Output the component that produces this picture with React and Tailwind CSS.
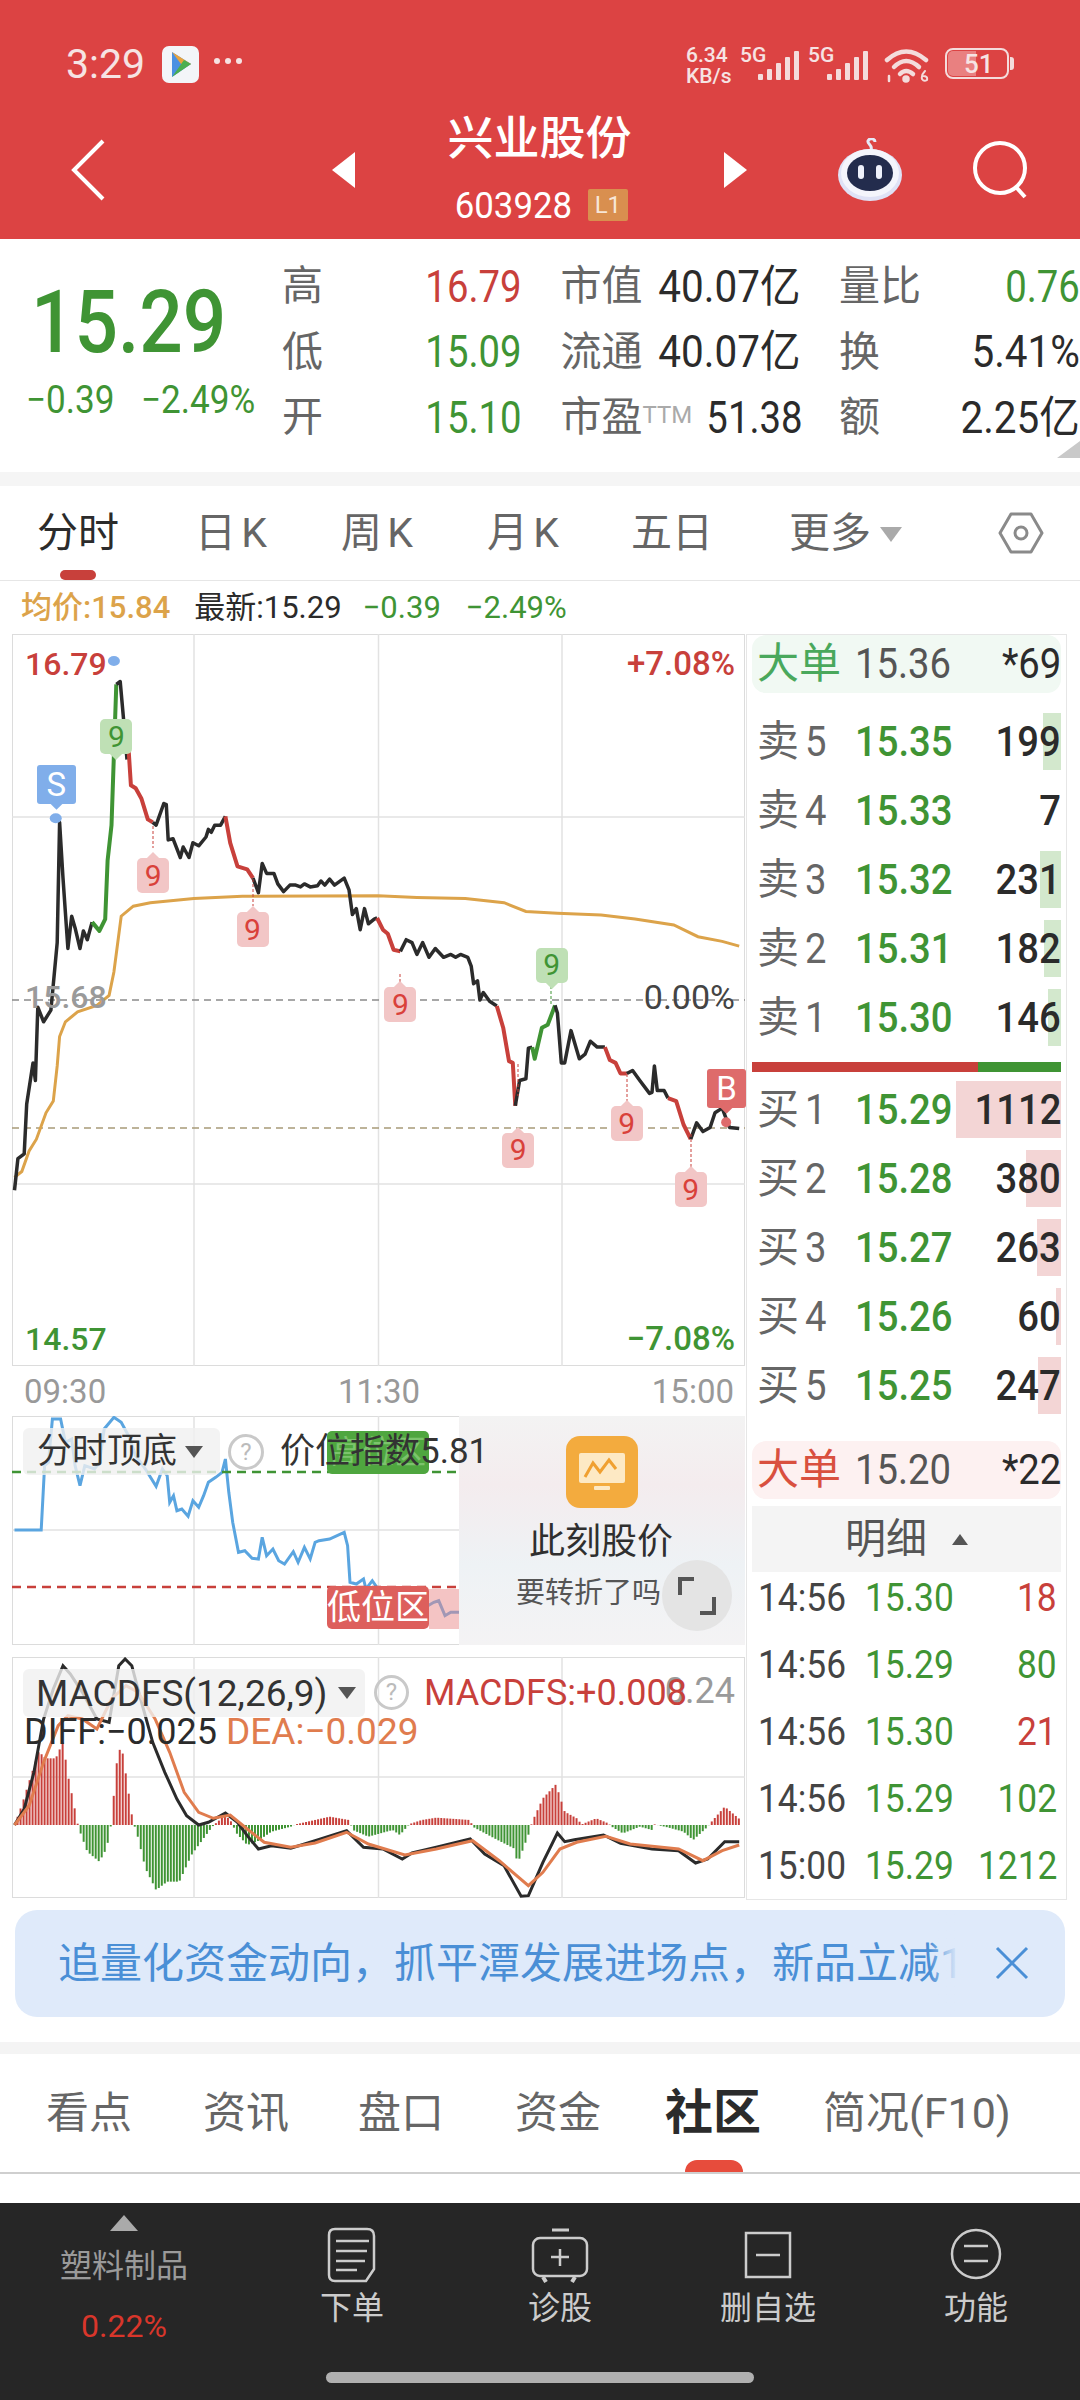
const GREEN = "#3f9434";
const RED = "#c8403b";
const DARK = "#2b2b2b";

// intraday price, one run of points per colour
const priceRuns = [
  [DARK, [[30,1212],[37,1158],[50,1150],[55,1065],[68,995],[73,1025],[78,900],[90,925],[105,905],[118,790],[123,585],[130,680],[140,800],[148,745],[155,765],[165,800],[172,770],[180,785],[190,755]]],
  [GREEN, [[190,755],[205,770],[217,750],[222,650],[230,590],[240,350]]],
  [DARK, [[240,350],[248,345],[255,410],[262,478]]],
  [RED, [[265,458],[270,522],[280,527],[292,545],[305,580],[315,585]]],
  [DARK, [[315,585],[322,590],[338,553],[343,555],[347,615],[357,613],[372,645],[378,627],[390,645],[398,620],[410,625],[425,610],[430,597],[436,602],[443,590],[455,590],[465,575]]],
  [RED, [[465,575],[475,620],[490,660],[510,665],[522,680]]],
  [DARK, [[522,680],[533,705],[541,655],[550,672],[565,672],[573,690],[585,703],[598,692],[610,692],[620,695],[628,690],[640,695],[655,693],[662,685],[670,692],[680,682],[690,692],[710,680],[720,700],[727,742],[735,732],[743,768],[752,732],[760,758],[772,750],[778,748]]],
  [RED, [[778,748],[790,768],[800,775],[812,802],[826,805]]],
  [DARK, [[826,805],[838,785],[850,790],[860,810],[872,790],[885,815],[898,800],[915,815],[930,810],[940,815],[950,810],[965,815],[972,830],[977,860],[985,855],[990,888],[997,875],[1010,890],[1025,898]]],
  [RED, [[1025,898],[1038,935],[1050,992],[1058,995],[1063,1068]]],
  [DARK, [[1063,1068],[1072,1025],[1085,1022],[1090,970],[1098,968]]],
  [GREEN, [[1098,968],[1103,988],[1118,935],[1130,930],[1145,897]]],
  [DARK, [[1145,897],[1150,910],[1158,995],[1165,995],[1178,940],[1195,988],[1207,980],[1218,958],[1232,968],[1248,968]]],
  [RED, [[1248,968],[1258,990],[1270,995],[1280,1013],[1293,1013]]],
  [DARK, [[1293,1013],[1305,1008],[1320,1025],[1340,1047],[1345,1045],[1350,1000],[1356,1042],[1370,1042],[1378,1055]]],
  [RED, [[1378,1055],[1395,1060],[1410,1100],[1425,1125]]],
  [DARK, [[1425,1125],[1437,1097],[1450,1112],[1465,1105],[1475,1080],[1490,1072],[1505,1105],[1525,1107]]],
];

const avgLine = [[30,1190],[45,1180],[60,1145],[75,1125],[95,1080],[110,1060],[118,1000],[123,950],[135,925],[160,908],[200,897],[225,880],[235,840],[250,745],[275,728],[310,722],[400,715],[500,711],[780,710],[860,713],[960,715],[1040,722],[1085,737],[1150,740],[1240,743],[1310,750],[1390,760],[1440,780],[1490,788],[1525,796]];

const priceIndex = [[30,393],[85,393],[92,200],[100,190],[108,60],[125,60],[135,130],[148,120],[155,200],[165,260],[175,200],[195,210],[205,190],[215,90],[235,55],[250,70],[265,110],[280,170],[300,210],[322,262],[335,210],[345,230],[350,310],[358,290],[365,335],[375,330],[388,352],[398,305],[410,325],[420,290],[430,250],[445,235],[458,220],[465,180],[472,280],[480,370],[492,460],[505,455],[520,478],[533,480],[541,415],[550,470],[563,450],[575,485],[587,495],[605,458],[615,490],[628,445],[640,480],[650,430],[658,425],[680,420],[710,400],[717,440],[722,550],[735,555],[750,540],[755,570],[768,545],[780,570],[800,600],[860,640],[895,610],[905,605],[918,650],[930,640],[947,640]];

const diffLine = [[30,1278],[50,1230],[70,1120],[90,960],[110,870],[130,800],[145,825],[170,880],[200,960],[225,970],[245,800],[258,780],[272,800],[290,900],[315,1030],[340,1120],[365,1200],[385,1250],[410,1278],[430,1270],[465,1242],[490,1270],[510,1310],[533,1350],[560,1340],[600,1348],[650,1325],[715,1295],[750,1345],[790,1350],[830,1380],[850,1362],[900,1345],[970,1320],[1000,1365],[1040,1400],[1075,1492],[1090,1490],[1120,1390],[1150,1302],[1165,1328],[1185,1322],[1245,1308],[1280,1333],[1345,1350],[1400,1355],[1435,1392],[1460,1380],[1495,1328],[1525,1328]];
const deaLine = [[30,1278],[60,1220],[90,1090],[120,980],[140,950],[170,960],[200,990],[230,900],[260,860],[285,880],[320,960],[350,1060],[380,1180],[410,1240],[440,1258],[475,1248],[510,1290],[545,1330],[600,1345],[650,1332],[715,1300],[760,1335],[835,1368],[900,1350],[975,1325],[1030,1385],[1090,1460],[1120,1420],[1155,1350],[1190,1330],[1250,1312],[1300,1335],[1400,1350],[1450,1385],[1490,1355],[1525,1338]];

// outline of the MACD columns, signed height from the zero line
const histOutline = [[30,0],[45,60],[60,130],[80,220],[95,200],[115,200],[130,250],[140,150],[150,80],[160,5],[165,-20],[180,-80],[205,-110],[220,-70],[228,-10],[233,60],[240,180],[250,245],[262,130],[272,30],[276,0],[280,-10],[300,-130],[322,-195],[345,-170],[370,-170],[395,-90],[420,-40],[438,-5],[445,5],[465,30],[480,5],[485,-20],[510,-60],[530,-50],[560,-20],[600,-5],[610,2],[680,25],[720,15],[724,0],[728,-15],[760,-35],[810,-15],[825,-30],[840,-5],[845,3],[870,15],[900,22],[970,15],[975,-5],[1020,-40],[1060,-70],[1068,-115],[1090,-30],[1098,10],[1120,80],[1147,122],[1165,40],[1190,20],[1200,2],[1230,20],[1255,5],[1262,-5],[1285,-25],[1320,-5],[1345,-15],[1350,2],[1380,-8],[1410,-20],[1430,-45],[1460,-5],[1465,5],[1495,55],[1528,15]];

const sellRows = [
  ["卖", 5, "15.35", 199, 18],
  ["卖", 4, "15.33", 7, 0],
  ["卖", 3, "15.32", 231, 21],
  ["卖", 2, "15.31", 182, 17],
  ["卖", 1, "15.30", 146, 13],
];
const buyRows = [
  ["买", 1, "15.29", 1112, 105],
  ["买", 2, "15.28", 380, 35],
  ["买", 3, "15.27", 263, 24],
  ["买", 4, "15.26", 60, 5],
  ["买", 5, "15.25", 247, 23],
];
const ticks = [
  ["14:56", "15.30", "18", RED],
  ["14:56", "15.29", "80", GREEN],
  ["14:56", "15.30", "21", RED],
  ["14:56", "15.29", "102", GREEN],
  ["15:00", "15.29", "1212", GREEN],
];

const chartX = (x) => x / 2.063 - 12;
const mainY = (y) => y / 1.704 - 155;
const indexY = (y) => y / 3 - 17;
const macdY = (y) => y / 3 - 258;
const pts = (list, fy) => list.map(([x, y]) => `${chartX(x).toFixed(1)},${fy(y).toFixed(1)}`).join(" ");

function histBars() {
  const bars = [];
  for (let x = 30; x <= 1528; x += 6.2) {
    const i = histOutline.findIndex((p) => p[0] >= x);
    const b = histOutline[Math.max(i, 1)];
    const a = histOutline[Math.max(i, 1) - 1];
    const v = a[1] + ((b[1] - a[1]) * (x - a[0])) / (b[0] - a[0] || 1);
    bars.push([x, v]);
  }
  return bars;
}

function NineTag({ x, y, tone, up }) {
  const tones = {
    red: "bg-[#f2c6c6] text-[#d9413a]",
    green: "bg-[#bfe0b5] text-[#3f9434]",
  };
  return (
    <div
      className={`absolute w-[32px] h-[35px] rounded-[5px] flex items-center justify-center text-[30px] leading-none font-normal ${tones[tone]}`}
      style={{ left: chartX(x) - 16, top: mainY(y) - 17 }}
    >
      <div className={`absolute left-[11px] w-[10px] h-[10px] rotate-45 ${up ? "-top-[4px]" : "-bottom-[4px]"} ${tones[tone]}`} />
      <span className="relative">9</span>
    </div>
  );
}

function SideTag({ x, y, box, label }) {
  return (
    <div
      className={`absolute w-[39px] h-[39px] rounded-[3px] flex items-center justify-center text-[33px] leading-none font-normal text-white ${box}`}
      style={{ left: chartX(x) - 19, top: mainY(y) - 19 }}
    >
      <div className={`absolute left-[15px] -bottom-[4px] w-[9px] h-[9px] rotate-45 ${box}`} />
      <span className="relative">{label}</span>
    </div>
  );
}

function Signal({ x }) {
  return (
    <svg width="46" height="30" viewBox="0 0 46 30" className={x}>
      <rect x="1" y="24" width="5" height="6" rx="1" fill="#f4dcdc" />
      <rect x="10" y="19" width="5" height="11" rx="1" fill="#f4dcdc" />
      <rect x="19" y="13" width="5" height="17" rx="1" fill="#f4dcdc" />
      <rect x="28" y="7" width="5" height="23" rx="1" fill="#f4dcdc" />
      <rect x="37" y="1" width="5" height="29" rx="1" fill="#f4dcdc" />
    </svg>
  );
}

function StatusBar() {
  return (
    <div className="h-[100px] relative flex items-start pt-[44px] text-[#f6e3e3]">
      <span className="ml-[66px] text-[41px] leading-[40px]">3:29</span>
      <svg width="37" height="37" viewBox="0 0 37 37" className="ml-[17px] mt-[2px]">
        <rect width="37" height="37" rx="7" fill="#f3f5f8" />
        <path d="M10 6 L29 18 L10 31 Z" fill="#4a90e2" />
        <path d="M10 6 L29 18 L22 22 Z" fill="#e9a33d" />
        <path d="M10 31 L29 18 L22 14 Z" fill="#4caf50" />
      </svg>
      <span className="ml-[15px] mt-[14px] flex gap-[5px]">
        <i className="w-[6px] h-[6px] rounded-full bg-[#f6e3e3]" />
        <i className="w-[6px] h-[6px] rounded-full bg-[#f6e3e3]" />
        <i className="w-[6px] h-[6px] rounded-full bg-[#f6e3e3]" />
      </span>
      <div className="absolute left-[686px] top-[45px] text-[21px] leading-[20px] font-medium">
        <div>6.34</div>
        <div className="mt-[1px]">KB/s</div>
      </div>
      <span className="absolute left-[740px] top-[45px] text-[21px] leading-[20px] font-medium">5G</span>
      <Signal x="absolute left-[757px] top-[50px]" />
      <span className="absolute left-[808px] top-[45px] text-[21px] leading-[20px] font-medium">5G</span>
      <Signal x="absolute left-[826px] top-[50px]" />
      <svg width="48" height="36" viewBox="0 0 48 36" className="absolute left-[884px] top-[47px]" fill="none" stroke="#f4dcdc" strokeWidth="4.5" strokeLinecap="round">
        <path d="M3 13 Q22 -4 42 13" />
        <path d="M10 20 Q22 8 35 20" />
        <path d="M16 27 Q22 21 29 27" />
        <circle cx="22" cy="32" r="1.5" fill="#f4dcdc" />
        <path d="M5 29 L5 34" strokeWidth="2.5" />
        <path d="M41 24 Q37 28 38 32 Q40 35 43 33 Q44 29 39 29" strokeWidth="2" />
      </svg>
      <div className="absolute left-[945px] top-[48px] w-[64px] h-[31px] rounded-[8px] border-2 border-[#f4dcdc] flex items-center">
        <div className="absolute left-[1px] top-[1px] bottom-[1px] w-[28px] rounded-l-[5px] bg-[#e98080]" />
        <span className="relative ml-[17px] text-[26px] leading-none font-medium">51</span>
      </div>
      <div className="absolute left-[1010px] top-[57px] w-[4px] h-[13px] rounded-r-[3px] bg-[#f4dcdc]" />
    </div>
  );
}

function NavBar() {
  return (
    <div className="h-[139px] flex items-center text-white">
      <svg width="37" height="62" viewBox="0 0 37 62" fill="none" stroke="#fff" strokeWidth="4" className="ml-[70px] shrink-0">
        <path d="M33 2 L4 31 L33 60" />
      </svg>
      <div className="ml-[225px] w-0 h-0 border-y-[18px] border-y-transparent border-r-[23px] border-r-white" />
      <div className="w-[369px] self-stretch pt-[10px] flex flex-col items-center">
        <div className="text-[46px] leading-[56px] font-medium">兴业股份</div>
        <div className="mt-[23px] h-[32px] flex items-center gap-[12px]">
          <span className="text-[37px] leading-none inline-block scale-x-[.94]">603928</span>
          <span className="w-[40px] h-[32px] rounded-[2px] bg-[#d98f4f] text-[#f7e6d6] text-[24px] leading-[32px] text-center">L1</span>
        </div>
      </div>
      <div className="w-0 h-0 border-y-[18px] border-y-transparent border-l-[23px] border-l-white" />
      <svg width="67" height="64" viewBox="0 0 67 64" className="ml-[90px]">
        <path d="M34 12 C36 7 30 6 31 3 C33 -1 38 1 38 4" fill="none" stroke="#e6e9f7" strokeWidth="3" />
        <ellipse cx="33" cy="37" rx="32" ry="26" fill="#dfe2f6" />
        <ellipse cx="33" cy="35" rx="29" ry="24" fill="#f4f5fc" />
        <ellipse cx="33" cy="35" rx="23" ry="18" fill="#232c4d" />
        <rect x="21" y="27" width="6" height="14" rx="3" fill="#eef1fb" />
        <rect x="39" y="27" width="6" height="14" rx="3" fill="#eef1fb" />
      </svg>
      <svg width="56" height="58" viewBox="0 0 56 58" fill="none" stroke="#fff" strokeWidth="4" className="ml-[69px] shrink-0">
        <circle cx="27" cy="27" r="25" />
        <path d="M43 46 L52 56" />
      </svg>
    </div>
  );
}

function QuoteCell({ label, value, color = "text-[#2b2b2b]", sup, wide }) {
  return (
    <div className="flex items-center justify-between h-[65.5px]">
      <span className="text-[41px] leading-none text-[#666] whitespace-nowrap">
        {label}
        {sup && <span className="text-[24px] align-[8px] text-[#aaa]">{sup}</span>}
      </span>
      <span className={`inline-block origin-right text-[44px] leading-none whitespace-nowrap ${wide ? "scale-x-[.92]" : "scale-x-[.87]"} ${color}`}>{value}</span>
    </div>
  );
}

function Quote() {
  return (
    <div className="h-[233px] relative bg-white flex">
      <div className="w-[282px] shrink-0">
        <div className="pl-[31px] pt-[40px] text-[88px] leading-[86px] font-medium text-[#3f9434]">
          <span className="inline-block origin-left scale-x-[.87]">15.29</span>
        </div>
        <div className="pl-[26px] mt-[15px] flex text-[39px] leading-[40px] text-[#3f9434]">
          <span className="w-[115px] inline-block origin-left scale-x-[.9]">−0.39</span>
          <span className="inline-block origin-left scale-x-[.9]">−2.49%</span>
        </div>
      </div>
      <div className="pt-[15px] grid grid-cols-[240px_240px_241px] gap-x-[38.5px] content-start">
        <QuoteCell label="高" value="16.79" color="text-[#c8403b]" />
        <QuoteCell label="市值" value="40.07亿" wide />
        <QuoteCell label="量比" value="0.76" color="text-[#3f9434]" />
        <QuoteCell label="低" value="15.09" color="text-[#3f9434]" />
        <QuoteCell label="流通" value="40.07亿" wide />
        <QuoteCell label="换" value="5.41%" wide />
        <QuoteCell label="开" value="15.10" color="text-[#3f9434]" />
        <QuoteCell label="市盈" sup="TTM" value="51.38" />
        <QuoteCell label="额" value="2.25亿" wide />
      </div>
      <div className="absolute right-0 bottom-[14px] w-0 h-0 border-b-[17px] border-b-[#c9c9c9] border-l-[23px] border-l-transparent" />
    </div>
  );
}

function ChartTabs() {
  const tabs = [["日 K", "w-[146px]"], ["周 K", "w-[146px]"], ["月 K", "w-[144px]"], ["五日", "w-[158px]"]];
  return (
    <div className="h-[95px] relative bg-white border-b border-[#e6e6e6] flex items-center pl-[37px] text-[41px] leading-none text-[#666] [word-spacing:-5px]">
      <span className="w-[158px] text-[#2b2b2b]">分时</span>
      {tabs.map(([t, w]) => (
        <span key={t} className={w}>{t}</span>
      ))}
      <span>更多</span>
      <div className="ml-[9px] mt-[3px] w-0 h-0 border-x-[11px] border-x-transparent border-t-[15px] border-t-[#aaa]" />
      <svg width="46" height="46" viewBox="0 0 46 46" fill="none" stroke="#8a8a8a" strokeWidth="3" className="absolute left-[998px] top-[24px]">
        <path d="M13 4 H33 L44 23 L33 42 H13 L2 23 Z" strokeLinejoin="round" />
        <circle cx="23" cy="23" r="6" />
      </svg>
      <div className="absolute left-[60px] top-[84px] w-[36px] h-[10px] rounded-full bg-[#c8403b]" />
    </div>
  );
}

function InfoLine() {
  return (
    <div className="h-[53px] bg-white flex items-center pl-[21px] text-[31px] leading-none">
      <span className="text-[#dca34a] font-medium">均价:15.84</span>
      <span className="ml-[24px] text-[#2b2b2b]">最新:15.29</span>
      <span className="ml-[21px] text-[#3f9434]">−0.39</span>
      <span className="ml-[25px] text-[#3f9434]">−2.49%</span>
    </div>
  );
}

function MainChart() {
  return (
    <div className="relative w-[733px] h-[732px] font-medium">
      <svg width="733" height="732" className="absolute left-0 top-0" fill="none">
        <rect x="0.5" y="0.5" width="732" height="731" stroke="#dcdcdc" />
        <path d="M182 0 V732 M366.5 0 V732 M550 0 V732 M0 183 H733 M0 550 H733" stroke="#e2e2e2" strokeWidth="1.5" />
        <path d="M0 366 H733" stroke="#8a8a8a" strokeWidth="1.5" strokeDasharray="7 5" />
        <path d="M0 494 H733" stroke="#a89a78" strokeWidth="1.5" strokeDasharray="7 5" />
        <polyline points={pts(avgLine, mainY)} stroke="#dca34a" strokeWidth="3" />
        {priceRuns.map(([color, run], i) => (
          <polyline key={i} points={pts(run, mainY)} stroke={color} strokeWidth={color === DARK ? 3.5 : 4} strokeLinejoin="round" />
        ))}
        <path d="M141 192 V214 M241 245 V272 M388 340 V366 M506 430 V462 M615 440 V470 M679 500 V535" stroke="#c8403b" strokeWidth="1" strokeDasharray="3 2" />
        <path d="M539 352 V370" stroke="#3f9434" strokeWidth="1" strokeDasharray="3 2" />
        <ellipse cx={chartX(235)} cy={mainY(310)} rx="6" ry="5" fill="#80aeea" />
        <ellipse cx={chartX(115)} cy={mainY(578)} rx="6" ry="5" fill="#80aeea" />
        <circle cx={chartX(1498)} cy={mainY(1096)} r="5" fill="#de6b6b" />
      </svg>
      <NineTag x={240} y={438} tone="green" />
      <NineTag x={316} y={675} tone="red" up />
      <NineTag x={521} y={767} tone="red" up />
      <NineTag x={826} y={895} tone="red" up />
      <NineTag x={1069} y={1143} tone="red" up />
      <NineTag x={1293} y={1098} tone="red" up />
      <NineTag x={1425} y={1210} tone="red" up />
      <NineTag x={1138} y={828} tone="green" />
      <SideTag x={115} y={520} box="bg-[#80aeea]" label="S" />
      <SideTag x={1498} y={1037} box="bg-[#de6b6b]" label="B" />
      <span className="absolute left-[13px] top-[12px] text-[32px] leading-[36px] text-[#c8403b]">16.79</span>
      <span className="absolute right-[10px] top-[12px] text-[33px] leading-[36px] text-[#c8403b]">+7.08%</span>
      <span className="absolute left-[13px] top-[345px] text-[32px] leading-[36px] text-[#9a9a9a]">15.68</span>
      <span className="absolute right-[10px] top-[345px] text-[34px] leading-[36px] font-normal text-[#444]">0.00%</span>
      <span className="absolute left-[13px] bottom-[9px] text-[32px] leading-[36px] text-[#3f9434]">14.57</span>
      <span className="absolute right-[10px] bottom-[9px] text-[33px] leading-[36px] text-[#3f9434]">−7.08%</span>
    </div>
  );
}

function IndexChart() {
  return (
    <div className="relative w-[733px] h-[229px] overflow-hidden">
      <svg width="733" height="229" className="absolute left-0 top-0" fill="none">
        <rect x="0.5" y="0.5" width="732" height="228" stroke="#dcdcdc" />
        <path d="M182 0 V229 M366.5 0 V229 M0 114 H733" stroke="#e2e2e2" strokeWidth="1.5" />
        <polyline points={pts(priceIndex, indexY)} stroke="#5aa5e0" strokeWidth="3" />
        <path d="M0 56 H733" stroke="#3f9434" strokeWidth="2.5" strokeDasharray="9 6" />
        <path d="M0 171 H733" stroke="#c8403b" strokeWidth="2.5" strokeDasharray="9 6" />
      </svg>
      <div className="absolute left-[315px] top-[15px] w-[102px] h-[43px] rounded-[5px] bg-[#4fa63f] text-[#7cc36d] text-[32px] leading-[43px] text-center">高位区</div>
      <div className="absolute left-[417px] top-[173px] w-[30px] h-[40px] bg-[#e98a8a]/50" />
      <div className="absolute left-[315px] top-[170px] w-[102px] h-[43px] rounded-[5px] bg-[#dd5f5c] text-white text-[34px] leading-[43px] text-center">低位区</div>
      <div className="absolute left-[11px] top-[12px] w-[197px] h-[47px] rounded-[6px] bg-[#f0f0f0]/80 flex items-center pl-[14px] text-[#333] text-[35px] leading-none">
        分时顶底
        <div className="ml-[8px] w-0 h-0 border-x-[9px] border-x-transparent border-t-[12px] border-t-[#555]" />
      </div>
      <div className="absolute left-[216px] top-[18px] w-[36px] h-[36px] rounded-full border-[3px] border-[#c9c9c9] text-[#bbb] text-[24px] leading-[30px] text-center">?</div>
      <div className="absolute left-[447px] top-0 bottom-0 right-0 bg-[linear-gradient(180deg,#f3f3f3_0%,#f4ecee_30%,#eef2f5_65%,#f4f3f4_100%)]">
        <svg width="72" height="72" viewBox="0 0 72 72" className="absolute left-[107px] top-[20px]">
          <rect width="72" height="72" rx="14" fill="#f3ab3e" />
          <rect x="13" y="17" width="46" height="30" rx="2" fill="#fde9c4" />
          <path d="M19 41 L27 27 L34 36 L43 24 L50 33" fill="none" stroke="#f0a030" strokeWidth="3" />
          <rect x="28" y="50" width="16" height="4" rx="1" fill="#fde9c4" />
        </svg>
        <div className="absolute left-0 w-[286px] top-[106px] text-center text-[36px] leading-[40px] text-[#2f2f2f] pr-[2px]">此刻股价</div>
        <div className="absolute left-[57px] top-[160px] text-[29px] leading-[34px] text-[#555] whitespace-nowrap">要转折了吗</div>
        <div className="absolute left-[203px] top-[144px] w-[70px] h-[71px] rounded-full bg-[#e4e4e4] flex items-center justify-center">
          <svg width="38" height="38" viewBox="0 0 38 38" fill="none" stroke="#555" strokeWidth="4">
            <path d="M2 18 V2 H16" />
            <path d="M36 20 V36 H22" />
          </svg>
        </div>
      </div>
      <span className="absolute left-[268px] top-[16px] text-[35px] leading-[40px] text-[#333] whitespace-nowrap">价位指数5.81</span>
    </div>
  );
}

function MacdChart() {
  return (
    <div className="relative w-[733px] h-[241px] mt-[12px] overflow-hidden">
      <svg width="733" height="241" className="absolute left-0 top-0" fill="none">
        <rect x="0.5" y="0.5" width="732" height="240" stroke="#dcdcdc" />
        <path d="M182 0 V241 M366.5 0 V241 M550 0 V241 M0 120 H733" stroke="#e2e2e2" strokeWidth="1.5" />
        {histBars().map(([x, v]) => (
          <line key={x} x1={chartX(x)} x2={chartX(x)} y1={macdY(1278)} y2={macdY(1278 - v)} stroke={v >= 0 ? "#c8403b" : "#3f9434"} strokeWidth="2" />
        ))}
        <polyline points={pts(diffLine, macdY)} stroke="#2b2b2b" strokeWidth="3" />
        <polyline points={pts(deaLine, macdY)} stroke="#e07c4e" strokeWidth="3" />
      </svg>
      <div className="absolute left-[11px] top-[12px] w-[342px] h-[48px] rounded-[6px] bg-[#f0f0f0]/80 flex items-center pl-[13px] text-[#333] text-[37px] leading-none whitespace-nowrap">
        MACDFS(12,26,9)
        <div className="ml-[11px] w-0 h-0 border-x-[9px] border-x-transparent border-t-[12px] border-t-[#555]" />
      </div>
      <div className="absolute left-[362px] top-[18px] w-[35px] h-[35px] rounded-full border-[3px] border-[#c9c9c9] text-[#bbb] text-[24px] leading-[29px] text-center">?</div>
      <span className="absolute right-[10px] top-[15px] text-[36px] leading-[38px] text-[#9a9a9a]">0.24</span>
      <span className="absolute left-[412px] top-[17px] text-[36px] leading-[38px] text-[#c8403b] whitespace-nowrap">MACDFS:+0.008</span>
      <span className="absolute left-[12px] top-[56px] text-[36px] leading-[38px] text-[#2b2b2b] whitespace-nowrap">DIFF:−0.025</span>
      <span className="absolute left-[214px] top-[56px] text-[37px] leading-[38px] text-[#e07c4e] whitespace-nowrap">DEA:−0.029</span>
    </div>
  );
}

function BigOrder({ label, price, qty, box, tone }) {
  return (
    <div className={`h-[58px] rounded-[14px] flex items-center pl-[5px] ${box}`}>
      <span className={`w-[98px] text-[42px] leading-none ${tone}`}>{label}</span>
      <span className="inline-block origin-left scale-x-[.91] text-[42px] leading-none text-[#555]">{price}</span>
      <span className="ml-auto inline-block origin-right scale-x-[.91] text-[42px] leading-none text-[#2b2b2b]">*{qty}</span>
    </div>
  );
}

function OrderRow({ row, bar }) {
  const [side, level, price, qty, width] = row;
  return (
    <div className="relative h-[57px] flex items-center pl-[5px]">
      {width > 0 && <div className={`absolute right-0 top-0 bottom-0 ${bar}`} style={{ width }} />}
      <span className="w-[48px] text-[42px] leading-none text-[#666]">{side}</span>
      <span className="w-[50px] inline-block origin-left scale-x-[.91] text-[42px] leading-none text-[#666]">{level}</span>
      <span className="inline-block origin-left scale-x-[.91] text-[42px] leading-none font-medium text-[#3f9434]">{price}</span>
      <span className="relative ml-auto inline-block origin-right scale-x-[.91] text-[42px] leading-none font-medium text-[#2b2b2b]">{qty}</span>
    </div>
  );
}

function OrderPanel() {
  return (
    <div className="w-[321px] h-[1266px] border border-[#e6e6e6] px-[5px] pt-0">
      <BigOrder label="大单" price="15.36" qty="69" box="bg-[#f1f9f3]" tone="text-[#4aa85c]" />
      <div className="mt-[20px] flex flex-col gap-[12px]">
        {sellRows.map((row) => (
          <OrderRow key={row[1]} row={row} bar="bg-[#d3e8cd]" />
        ))}
      </div>
      <div className="mt-[16px] h-[10px] flex">
        <div className="w-[226px] bg-[#c8403b]" />
        <div className="flex-1 bg-[#3f9434]" />
      </div>
      <div className="mt-[9px] flex flex-col gap-[12px]">
        {buyRows.map((row) => (
          <OrderRow key={row[1]} row={row} bar="bg-[#f3d5d5]" />
        ))}
      </div>
      <div className="mt-[27px]">
        <BigOrder label="大单" price="15.20" qty="22" box="bg-[#fdf1f1]" tone="text-[#d9503f]" />
      </div>
      <div className="mt-[7px] h-[66px] bg-[#f4f4f4] flex items-center pl-[93px] text-[41px] leading-none text-[#555]">
        明细
        <div className="ml-[25px] w-0 h-0 border-x-[8px] border-x-transparent border-b-[11px] border-b-[#555]" />
      </div>
      <div className="flex flex-col gap-[16px]">
        {ticks.map(([time, price, vol, color], i) => (
          <div key={i} className="h-[51px] flex items-center pl-[6px] pr-[4px] text-[38px] leading-none">
            <span className="w-[107px] inline-block origin-left scale-x-[.93] text-[#444]">{time}</span>
            <span className="inline-block origin-left scale-x-[.93] text-[#3f9434]">{price}</span>
            <span className="ml-auto inline-block origin-right scale-x-[.93]" style={{ color }}>{vol}</span>
          </div>
        ))}
      </div>
    </div>
  );
}

function Banner() {
  return (
    <div className="relative mt-[10px] mx-[15px] h-[107px] rounded-[22px] bg-[#dfeafa] flex items-center pl-[43px]">
      <span className="whitespace-nowrap text-[42px] leading-none text-[#4a8fd6]">追量化资金动向，抓平潭发展进场点，新品立减1</span>
      <div className="absolute left-[915px] top-0 bottom-0 w-[28px] bg-linear-to-r from-[#dfeafa]/0 to-[#dfeafa]" />
      <svg width="34" height="34" viewBox="0 0 34 34" fill="none" stroke="#4a8fd6" strokeWidth="3" className="absolute left-[980px] top-[36px]">
        <path d="M2 2 L32 32 M32 2 L2 32" />
      </svg>
    </div>
  );
}

function BottomTabs() {
  const tabs = [
    ["看点", "w-[157px]"],
    ["资讯", "w-[155px]"],
    ["盘口", "w-[157px]"],
    ["资金", "w-[150px]"],
  ];
  return (
    <div className="relative h-[120px] bg-white border-b-2 border-[#cfcfcf] flex items-center pl-[46px] text-[43px] leading-none text-[#666]">
      {tabs.map(([t, w]) => (
        <span key={t} className={w}>{t}</span>
      ))}
      <span className="w-[158px] text-[48px] font-bold text-[#2b2b2b]">社区</span>
      <span>简况(F10)</span>
      <div className="absolute left-[685px] bottom-0 w-[58px] h-[12px] rounded-t-full rounded-b-[3px] bg-[#e74c3c]" />
    </div>
  );
}

function Footer() {
  return (
    <div className="relative h-[197px] bg-[#262626] flex text-[32px] leading-none">
      <div className="w-[248px] flex flex-col items-center pt-[12px] text-[#9a9a9a]">
        <div className="w-0 h-0 border-x-[14px] border-x-transparent border-b-[16px] border-b-[#aaa]" />
        <span className="mt-[19px]">塑料制品</span>
        <span className="mt-[28px] text-[#d9362b]">0.22%</span>
      </div>
      <div className="w-[208px] flex flex-col items-center pt-[24px] text-[#ccc]">
        <svg width="50" height="56" viewBox="0 0 50 56" fill="none" stroke="#ccc" strokeWidth="2.5" className="h-[56px]">
          <path d="M8 2 H40 Q47 2 47 9 V42 L39 54 H8 Q2 54 2 48 V8 Q2 2 8 2 Z" />
          <path d="M9 14 H42 M9 24 H40 M9 34 H38" />
          <path d="M9 43 H30" />
        </svg>
        <span className="mt-[9px]">下单</span>
      </div>
      <div className="w-[208px] flex flex-col items-center pt-[24px] text-[#ccc]">
        <svg width="58" height="56" viewBox="0 0 58 56" fill="none" stroke="#ccc" strokeWidth="2.5" className="h-[56px]">
          <path d="M21 3 H38" strokeWidth="3" />
          <rect x="2" y="11" width="54" height="38" rx="7" />
          <path d="M29 22 V39 M20 30 H38" />
          <path d="M12 50 L15 55 M44 50 L41 55" strokeWidth="4" />
        </svg>
        <span className="mt-[9px]">诊股</span>
      </div>
      <div className="w-[208px] flex flex-col items-center pt-[28px] text-[#ccc]">
        <svg width="48" height="48" viewBox="0 0 48 48" fill="none" stroke="#ccc" strokeWidth="2.5" className="h-[48px]">
          <rect x="2" y="2" width="44" height="44" />
          <path d="M12 24 H36" />
        </svg>
        <span className="mt-[13px]">删自选</span>
      </div>
      <div className="w-[208px] flex flex-col items-center pt-[25px] text-[#ccc]">
        <svg width="52" height="52" viewBox="0 0 52 52" fill="none" stroke="#ccc" strokeWidth="2.5" className="h-[52px]">
          <circle cx="26" cy="26" r="24" />
          <path d="M14 18 H38 M14 33 H38" />
        </svg>
        <span className="mt-[12px]">功能</span>
      </div>
      <div className="absolute left-[326px] top-[169px] w-[428px] h-[11px] rounded-full bg-[#b0b0b0]" />
    </div>
  );
}

export default function App() {
  return (
    <div className="w-[1080px] h-[2400px] overflow-hidden bg-white font-[Roboto,'Noto_Sans_CJK_SC',sans-serif]">
      <div className="h-[239px] bg-[#dc4343]">
        <StatusBar />
        <NavBar />
      </div>
      <Quote />
      <div className="h-[14px] bg-[#f5f5f5]" />
      <ChartTabs />
      <InfoLine />
      <div className="flex">
        <div className="w-[746px] pl-[12px] flex flex-col">
          <MainChart />
          <div className="h-[50px] pt-[8px] px-[12px] flex justify-between text-[33px] leading-[36px] text-[#999]">
            <span>09:30</span>
            <span>11:30</span>
            <span>15:00</span>
          </div>
          <IndexChart />
          <MacdChart />
        </div>
        <OrderPanel />
      </div>
      <Banner />
      <div className="mt-[25px] h-[12px] bg-[#f4f4f4]" />
      <BottomTabs />
      <div className="h-[29px] bg-white" />
      <Footer />
    </div>
  );
}
